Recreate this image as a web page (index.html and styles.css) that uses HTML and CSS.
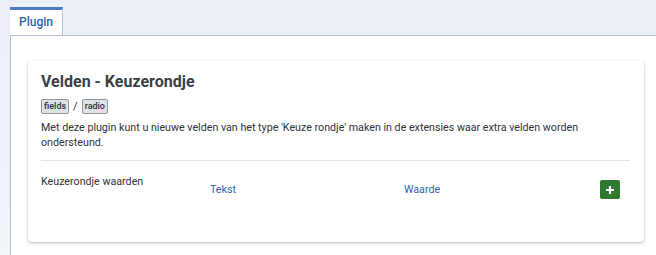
FILE: index.html
```html
<!DOCTYPE html>
<html lang="nl">
<head>
  <meta charset="UTF-8">
  <title>Plugin - Velden - Keuzerondje</title>
  <link rel="stylesheet" href="styles.css">
</head>
<body>
  <div class="tabs">
    <div class="tab active">Plugin</div>
  </div>
  <div class="tab-content">
    <div class="card">
      <h1>Velden - Keuzerondje</h1>
      <div class="badges">
        <span class="badge">fields</span>
        <span class="sep">/</span>
        <span class="badge">radio</span>
      </div>
      <p class="desc">Met deze plugin kunt u nieuwe velden van het type 'Keuze rondje' maken in de extensies waar extra velden worden ondersteund.</p>
      <div class="field-row">
        <div class="field-label">Keuzerondje waarden</div>
        <div class="field-cols">
          <span class="col col-text">Tekst</span>
          <span class="col col-value">Waarde</span>
          <button class="btn-add" title="Toevoegen">
            <svg width="10" height="10" viewBox="0 0 10 10"><path d="M5 1v8M1 5h8" stroke="#fff" stroke-width="2.2"/></svg>
          </button>
        </div>
      </div>
    </div>
  </div>
</body>
</html>
```

FILE: styles.css
```css
html, body {
  margin: 0;
  height: 100%;
}

body {
  display: flex;
  flex-direction: column;
  background: linear-gradient(#eaeff7, #f1f4f9);
  font-family: Roboto, "Noto Sans", sans-serif;
  color: #22262a;
  padding-left: 10px;
  box-sizing: border-box;
  overflow: hidden;
}

.tabs {
  display: flex;
  padding-top: 7px;
}

.tab {
  width: 52px;
  height: 25px;
  border-top: 3px solid #4a7bc4;
  border-right: 1px solid #b5c3d4;
  background: #fff;
  color: #2d5fa9;
  font-size: 12px;
  font-weight: 500;
  text-align: center;
  line-height: 25px;
}

.tab-content {
  flex: 1;
  min-height: 0;
  background: #fff;
  border-top: 1px solid #b2c0d1;
  border-left: 1px solid #b2c0d1;
  padding: 25px 12px 0 17px;
}

.card {
  background: #fff;
  border-radius: 4px;
  box-shadow: 0 1px 3px rgba(0, 0, 0, 0.28);
  padding: 11px 14px 0 13px;
  height: 181px;
  box-sizing: border-box;
}

h1 {
  margin: 0;
  font-size: 16px;
  font-weight: 700;
  color: #3b3f44;
  line-height: 20px;
}

.badges {
  display: flex;
  align-items: center;
  gap: 4px;
  margin-top: 7px;
  height: 15px;
}

.badge {
  font-size: 9px;
  font-weight: 500;
  color: #2f3337;
  background: #dde2e7;
  border: 1px solid #8f969c;
  border-radius: 2px;
  padding: 0 2px;
  line-height: 13px;
}

.sep {
  font-size: 11px;
  color: #333;
}

.desc {
  margin: 6px 0 0;
  font-size: 10.7px;
  line-height: 15px;
  color: #2f3439;
  padding-bottom: 10px;
  border-bottom: 1px solid #e1e3e5;
}

.field-row {
  display: flex;
  padding-top: 14px;
}

.field-label {
  width: 169px;
  font-size: 10.7px;
  color: #2f3439;
  line-height: 14px;
}

.field-cols {
  flex: 1;
  display: flex;
  align-items: center;
  height: 19px;
  padding-top: 5px;
}

.col {
  font-size: 10.7px;
  color: #2c64ad;
}

.col-text {
  width: 194px;
}

.col-value {
  flex: 1;
}

.btn-add {
  width: 20px;
  height: 19px;
  margin-right: 10px;
  border: none;
  border-radius: 2px;
  background: #2e7a31;
  padding: 0;
  display: flex;
  align-items: center;
  justify-content: center;
}
```
